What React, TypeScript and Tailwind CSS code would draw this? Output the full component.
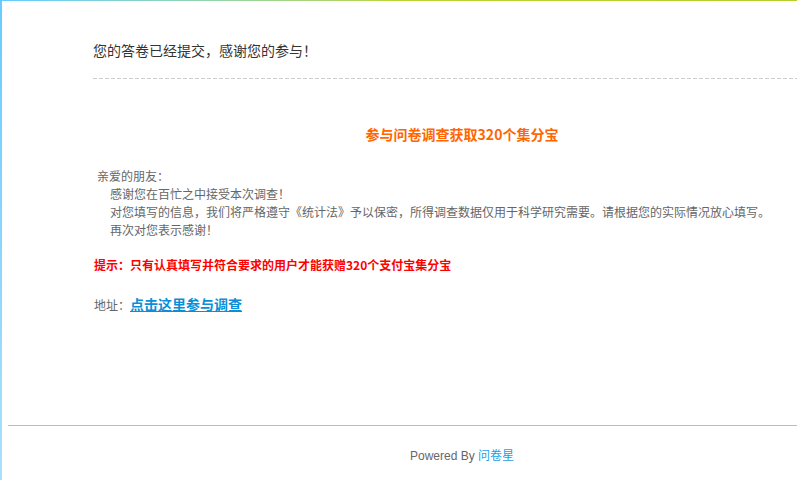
import React from 'react';

const cjk = '"Noto Sans CJK SC", "Liberation Sans", sans-serif';

export default function App() {
  return (
    <div className="min-h-[480px] flex bg-white" style={{ fontFamily: cjk }}>
      {/* left blue strip */}
      <div className="w-[2px] shrink-0 bg-gradient-to-b from-[#66ccff] to-[#a8e0fb]" />

      <div className="flex-1 min-w-0">
        {/* top decorative bar */}
        <div className="h-px bg-gradient-to-r from-[#66ccff] via-[#b8d432] to-[#b2cf2a]" />

        <div className="pl-[91px]">
          <div className="mt-[39px] pb-[18px]">
            <p className="text-[14px] leading-[20px] text-[#333333]">您的答卷已经提交，感谢您的参与！</p>
          </div>
          {/* dashed divider */}
          <div className="h-px bg-[linear-gradient(to_right,#cccccc_4px,transparent_4px)] bg-[length:6px_1px]" />

          <h2 className="mt-[45px] pl-[34px] text-center text-[14px] leading-[20px] font-bold text-[#ff6600]">
            参与问卷调查获取320个集分宝
          </h2>

          <div className="mt-[23px] text-[12px] leading-[18px] text-[#666666]">
            <p className="pl-[4px]">亲爱的朋友：</p>
            <p className="pl-[17px]">感谢您在百忙之中接受本次调查！</p>
            <p className="pl-[17px]">对您填写的信息，我们将严格遵守《统计法》予以保密，所得调查数据仅用于科学研究需要。请根据您的实际情况放心填写。</p>
            <p className="pl-[17px]">再次对您表示感谢！</p>
          </div>

          <p className="mt-[17px] pl-px text-[12px] leading-[18px] font-bold text-[#ff0000]">
            提示：只有认真填写并符合要求的用户才能获赠320个支付宝集分宝
          </p>

          <p className="mt-[20px] pl-px leading-[20px] text-[12px] text-[#666666]">
            地址：
            <a href="#" className="text-[14px] font-bold text-[#0b8ed8] underline">
              点击这里参与调查
            </a>
          </p>
        </div>

        {/* footer */}
        <div className="mt-[110px] ml-[6px] border-t border-[#bbbbbb]">
          <p className="pt-[19px] pl-[119px] text-center text-[12px] leading-[20px] text-[#666666]">
            <span style={{ fontFamily: '"Liberation Sans", sans-serif' }}>Powered By </span>
            <a href="#" className="text-[#1ea0e6]">问卷星</a>
          </p>
        </div>
      </div>
    </div>
  );
}
